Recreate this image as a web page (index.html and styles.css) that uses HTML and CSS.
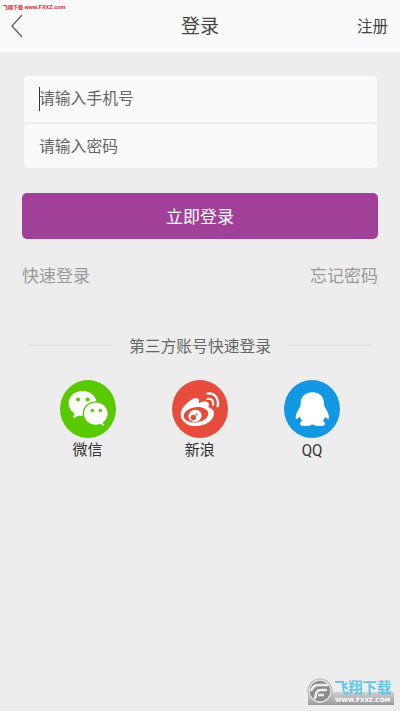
FILE: index.html
```html
<!DOCTYPE html>
<html lang="zh-CN">
<head>
<meta charset="utf-8">
<title>登录</title>
<link rel="stylesheet" href="styles.css">
</head>
<body>
<header class="header">
  <svg class="back" viewBox="0 0 12 24"><path d="M11 1 1 12 11 23"/></svg>
  <h1 class="title">登录</h1>
  <a class="register">注册</a>
  <span class="stamp">飞翔下载 <b>www.FXXZ.com</b></span>
</header>
<main class="main">
  <div class="fields">
    <div class="field field-phone"><i class="caret"></i><span>请输入手机号</span></div>
    <div class="field field-password"><span>请输入密码</span></div>
  </div>
  <div class="submit">立即登录</div>
  <div class="links"><a>快速登录</a><a>忘记密码</a></div>
  <div class="divider"><span>第三方账号快速登录</span></div>
  <div class="socials">
    <div class="social">
      <svg viewBox="28 29 168 175" preserveAspectRatio="none">
        <ellipse cx="112" cy="116.500" rx="84" ry="87.500" fill="#59c900"/>
        <path fill="#fff" d="M96 62C72 62 54 78 54 99c0 13 6 23 17 30l-4 16 18-9c6 1 14 1 20-1 20-4 33-18 33-36 0-21-19-37-42-37z"/>
        <path fill="#fff" stroke="#59c900" stroke-width="4" d="M136 95c-21 0-38 15-38 35 0 21 17 36 38 36 4 0 8-1 12-2l15 7-4-13c9-7 14-16 14-28 0-20-17-35-37-35z"/>
        <g fill="#59c900"><circle cx="82" cy="88" r="6"/><circle cx="111" cy="88" r="6"/><circle cx="125" cy="121" r="5"/><circle cx="149" cy="121" r="5"/></g>
      </svg>
      <span>微信</span>
    </div>
    <div class="social">
      <svg viewBox="36 29 168 175" preserveAspectRatio="none">
        <ellipse cx="120" cy="116.500" rx="84" ry="87.500" fill="#e64b3b"/>
        <path fill="#fff" d="M62 132c0-13 10-25 21-35 12-11 25-17 31-12 4 3 4 8 2 14 10-5 23-7 28-2 4 4 3 9 1 14 10 3 17 9 17 19 0 21-26 38-55 38-26 0-45-15-45-36z"/>
        <ellipse cx="108" cy="134" rx="37" ry="23" fill="#e64b3b" transform="rotate(-8 108 134)"/>
        <ellipse cx="105" cy="137" rx="20" ry="18" fill="#fff" transform="rotate(-20 105 137)"/>
        <circle cx="100" cy="142" r="8" fill="#e64b3b"/><circle cx="110" cy="133" r="3" fill="#e64b3b"/>
        <g fill="none" stroke="#fff" stroke-linecap="round"><path stroke-width="7" d="M143 70c20-4 35 16 30 38"/><path stroke-width="6" d="M142 86c12-3 20 6 17 18"/></g>
      </svg>
      <span>新浪</span>
    </div>
    <div class="social">
      <svg viewBox="27 29 168 175" preserveAspectRatio="none">
        <ellipse cx="111" cy="116.500" rx="84" ry="87.500" fill="#1298e2"/>
        <path fill="#fff" d="M112 66c-21 0-35 13-35 33 0 5-1 8-3 13-7 11-12 22-12 30 0 6 4 6 8 1l5-3c1 5 3 9 7 13-5 2-7 5-7 8 0 5 5 7 15 7 9 0 16-1 20-5h5c4 4 11 5 20 5 10 0 15-2 15-7 0-3-2-6-7-8 4-4 6-8 7-13l4 3c5 5 8 5 8-1 0-8-5-19-12-30-2-5-3-8-3-13 0-20-14-33-35-33z"/>
      </svg>
      <span class="latin">QQ</span>
    </div>
  </div>
</main>
<div class="watermark">
  <div class="bar">WWW.FXXZ.COM</div>
  <svg class="seal" viewBox="0 0 26 26"><circle cx="13" cy="13" r="12.500" fill="#aaa"/><circle cx="13" cy="13" r="11" fill="#8d8d8d" stroke="#e4e4e4" stroke-width="1.300"/><path fill="none" stroke="#ececec" stroke-width="2.600" d="M4 13c2-5 4-6 9-6h8M8 21c1-7 2-9 6-9h6M11 17h6"/></svg>
  <div class="brand">飞翔下载</div>
</div>
</body>
</html>
```
FILE: styles.css
```css
* { box-sizing: border-box; }
body {
  margin: 0;
  height: 711px;
  position: relative;
  overflow: hidden;
  background: #ededed;
  color: #444;
  font-family: Roboto, "Noto Sans CJK SC", sans-serif;
}
.header {
  position: relative;
  height: 52px;
  padding: 2px 12px 0 10px;
  background: #fafafa;
  display: grid;
  grid-template-columns: 1fr auto 1fr;
  align-items: center;
}
.back {
  width: 14px;
  height: 24px;
  margin-top: -3px;
  fill: none;
  stroke: #666;
  stroke-width: 1.4;
}
.title { margin: 0 0 0 2px; font-size: 19px; line-height: 28px; font-weight: 400; }
.register { justify-self: end; font-size: 15.5px; line-height: 24px; }
.stamp {
  position: absolute;
  left: 3px;
  top: 2px;
  font: 700 5px/10px "Liberation Sans", "Noto Sans CJK SC", sans-serif;
  color: #d3292d;
  white-space: nowrap;
}
.stamp b { font-size: 5.5px; }
.main { padding: 24px 22px 0; }
.fields { margin: 0 1.5px; display: grid; gap: 2.5px; }
.field {
  display: flex;
  align-items: center;
  padding-left: 15.5px;
  background: #fafafa;
  color: #666;
  font-size: 15.8px;
  line-height: 24px;
  border-radius: 4px;
}
.field-phone { height: 45.5px; border-radius: 4px 4px 0 0; }
.field-password { height: 44px; padding-top: 1px; }
.caret { width: 1px; height: 24px; margin-right: -1px; background: #333; }
.submit {
  margin-top: 24.5px;
  height: 46px;
  border-radius: 5px;
  background: #a04098;
  color: #fff;
  font-size: 17px;
  line-height: 48px;
  text-align: center;
}
.links {
  display: flex;
  justify-content: space-between;
  margin-top: 25px;
  color: #999;
  font-size: 17px;
  line-height: 25px;
}
.divider {
  display: flex;
  align-items: center;
  gap: 17px;
  margin: 44px 6px 0;
  color: #666;
  font-size: 15.8px;
  line-height: 25px;
}
.divider span { position: relative; top: 1px; }
.divider::before, .divider::after { content: ""; flex: 1; height: 1px; background: #dedede; }
.socials { display: flex; gap: 56.3px; margin: 22px 0 0 37.5px; }
.social { width: 56px; text-align: center; font-size: 15px; line-height: 25px; color: #333; }
.social svg { display: block; width: 56px; height: 58px; }
.latin { display: inline-block; font-size: 16px; transform: scaleX(.94); }
.watermark { position: absolute; left: 307px; top: 678px; width: 87px; height: 28px; }
.bar {
  position: absolute;
  left: 1px;
  right: 0;
  bottom: 1px;
  height: 13px;
  padding: 4px 0 0 27px;
  background: linear-gradient(#d0d0d0, #999);
  color: #fff;
  font: 700 5.7px/9px "DejaVu Sans", sans-serif;
  letter-spacing: .1px;
  white-space: nowrap;
}
.seal { position: absolute; left: 0; top: 0; width: 26px; height: 26px; }
.brand {
  position: absolute;
  left: 27px;
  top: 0;
  color: #62c6ea;
  font: 700 14.3px/18px "Noto Sans CJK SC", sans-serif;
  white-space: nowrap;
}
```
